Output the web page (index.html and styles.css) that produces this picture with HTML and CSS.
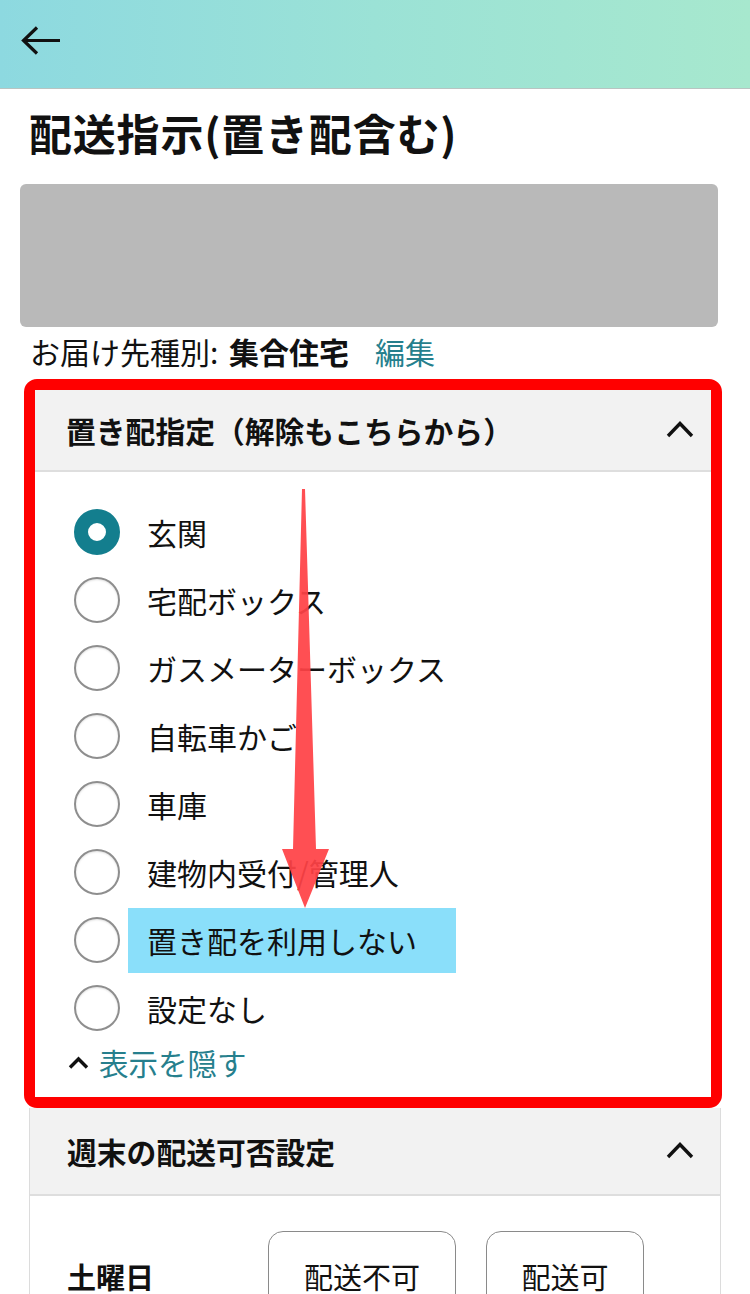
FILE: index.html
```html
<!DOCTYPE html>
<html lang="ja">
<head>
<meta charset="utf-8">
<title>配送指示(置き配含む)</title>
<link rel="stylesheet" href="styles.css">
</head>
<body>
<header class="topbar">
  <svg class="back" width="40" height="30" viewBox="0 0 40 30"><path d="M39 14.5H3 M16 1.5L2.5 14.5L16 27.5" fill="none" stroke="#111" stroke-width="3.2" stroke-linejoin="miter"/></svg>
</header>
<main class="page">
  <h1 class="title">配送指示(置き配含む)</h1>
  <div class="address"></div>
  <p class="dest">お届け先種別: <b>集合住宅</b><a class="edit">編集</a></p>

  <div class="annot">
    <section class="panel">
      <div class="panel-head">
        <span>置き配指定（解除もこちらから）</span>
        <svg class="chev" width="28" height="18" viewBox="0 0 28 18"><path d="M2 16L14 3.5L26 16" fill="none" stroke="#111" stroke-width="3.4"/></svg>
      </div>
      <div class="panel-body">
        <ul class="radios">
          <li class="row"><span class="radio on"></span><span class="label">玄関</span></li>
          <li class="row"><span class="radio"></span><span class="label">宅配ボックス</span></li>
          <li class="row"><span class="radio"></span><span class="label">ガスメーターボックス</span></li>
          <li class="row"><span class="radio"></span><span class="label">自転車かご</span></li>
          <li class="row"><span class="radio"></span><span class="label">車庫</span></li>
          <li class="row"><span class="radio"></span><span class="label">建物内受付/管理人</span></li>
          <li class="row"><span class="radio"></span><span class="label hl">置き配を利用しない</span></li>
          <li class="row"><span class="radio"></span><span class="label">設定なし</span></li>
        </ul>
        <div class="hide-link">
          <svg class="chev-s" width="21" height="13" viewBox="0 0 21 13"><path d="M2 11.5L10.5 3L19 11.5" fill="none" stroke="#111" stroke-width="3.4"/></svg>
          <span>表示を隠す</span>
        </div>
      </div>
    </section>
  </div>

  <section class="panel panel2">
    <div class="panel-head">
      <span>週末の配送可否設定</span>
      <svg class="chev" width="28" height="18" viewBox="0 0 28 18"><path d="M2 16L14 3.5L26 16" fill="none" stroke="#111" stroke-width="3.4"/></svg>
    </div>
    <div class="panel-body2">
      <div class="day-row">
        <span class="day">土曜日</span>
        <button class="opt wide">配送不可</button>
        <button class="opt">配送可</button>
      </div>
    </div>
  </section>
</main>

<svg class="arrow" width="750" height="1294" viewBox="0 0 750 1294">
  <polygon points="302,489 305,489 316,849 329,849 305,908 282,849 293,849" fill="#ff4246" fill-opacity="0.93"/>
</svg>
</body>
</html>
```

FILE: styles.css
```css
* { box-sizing: border-box; }
html, body { margin: 0; padding: 0; }
body {
  font-family: "Noto Sans CJK JP", "Noto Sans", sans-serif;
  color: #111;
  background: #fff;
  position: relative;
  overflow: hidden;
  height: 1294px;
}
.topbar {
  height: 89px;
  background: linear-gradient(90deg, #8dd9e0 0%, #9be2d6 50%, #a7e8ce 100%);
  border-bottom: 1px solid #b9c4c2;
  display: flex;
  align-items: center;
  padding-left: 21px;
}
.back { display: block; margin-top: -7px; }
.page {
  padding: 0 28px 0 20px;
}
.title {
  margin: 22px 0 0 9px;
  font-size: 43px;
  line-height: 43px;
  font-weight: 700;
  letter-spacing: 0.8px;
}
.address {
  margin-top: 30px;
  width: 698px;
  height: 143px;
  background: #b9b9b9;
  border-radius: 6px;
}
.dest {
  margin: 10px 0 0 10px;
  font-size: 30px;
  line-height: 29px;
  height: 29px;
}
.dest b { font-weight: 700; margin-left: 4px; }
.edit { color: #267f8d; margin-left: 26px; }
.annot {
  margin: 13px 0 0 4px;
  width: 698px;
  border: 11px solid #ff0000;
  border-radius: 13px;
}
.panel { background: #fff; }
.panel-head {
  height: 82px;
  background: #f2f2f2;
  border-bottom: 2px solid #dedede;
  display: flex;
  align-items: center;
  justify-content: space-between;
  padding: 0 17px 0 31px;
  font-size: 29.8px;
  font-weight: 700;
}
.chev { display: block; margin-top: -2px; }
.panel-body { padding: 26px 0 15px 0; }
.radios { list-style: none; margin: 0; padding: 0; }
.row {
  height: 68px;
  display: flex;
  align-items: center;
}
.radio {
  margin-left: 39px;
  width: 46px;
  height: 46px;
  border-radius: 50%;
  border: 2px solid #8e8e8e;
  box-shadow: inset 0 1px 2px rgba(0,0,0,0.12);
  flex: none;
}
.radio.on {
  border: 14px solid #137e8e;
  box-shadow: none;
  background: #fff;
}
.label {
  margin-left: 27px;
  font-size: 30px;
  line-height: 65px;
}
.label.hl {
  margin-left: 8px;
  padding: 0 39px 0 19px;
  height: 65px;
  background: #8adffa;
}
.hide-link {
  height: 40px;
  display: flex;
  align-items: center;
  padding-left: 33px;
  font-size: 29.5px;
  color: #267f8d;
}
.chev-s { display: block; margin-right: 10px; }
.panel2 {
  margin: 0 1px 0 9px;
  border-left: 1px solid #dcdcdc;
  border-right: 1px solid #dcdcdc;
}
.panel2 .panel-head {
  height: 88px;
  padding: 0 26px 0 37px;
  align-items: center;
}
.panel-body2 { padding: 35px 0 0 37px; }
.day-row { display: flex; align-items: center; }
.day {
  width: 201px;
  font-size: 29px;
  font-weight: 700;
}
.opt {
  height: 90px;
  width: 158px;
  border: 1.5px solid #8a8a8a;
  border-radius: 15px;
  background: #fff;
  font-family: "Noto Sans CJK JP", sans-serif;
  font-size: 29px;
  color: #111;
  margin-right: 30px;
  padding: 0;
}
.opt.wide { width: 188px; }
.arrow {
  position: absolute;
  left: 0;
  top: 0;
  pointer-events: none;
}
```
